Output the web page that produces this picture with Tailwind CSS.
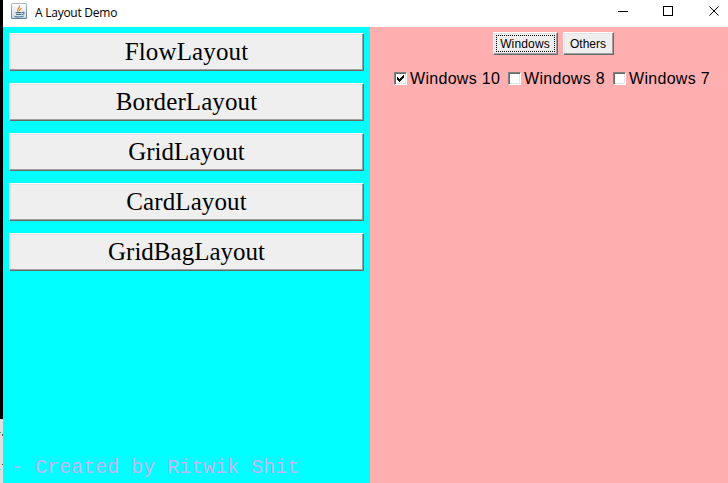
<!DOCTYPE html>
<html lang="en">
<head>
<meta charset="utf-8">
<title>A Layout Demo</title>
<script src="https://cdn.jsdelivr.net/npm/@tailwindcss/browser@4"></script>
</head>
<body class="flex h-[483px] w-[728px] overflow-hidden bg-white text-black">
<!-- Desktop edge behind the window -->
<div class="flex w-[3px] shrink-0 flex-col bg-[#dedede]">
  <div class="h-[419px] bg-black"></div>
  <div class="mt-[13px] h-px w-px bg-[#239ca6]"></div>
  <div class="mt-px ml-[2px] h-[2px] bg-[#5c5a20]"></div>
  <div class="mt-[28px] ml-[2px] h-px bg-[#5c5a20]"></div>
  <div class="mt-[4px] h-px w-px bg-[#6cd0dc]"></div>
</div>
<div class="flex min-w-0 flex-1 flex-col">
  <header class="flex h-[27px] shrink-0 items-start bg-white">
    <svg class="mt-[3px] ml-[8px] shrink-0" width="16" height="16" viewBox="0 0 16 16">
      <defs><linearGradient id="tile" x2="0" y2="1"><stop stop-color="#a9bccb"/><stop offset="1" stop-color="#577b98"/></linearGradient>
      <linearGradient id="face" x2="0" y2="1"><stop stop-color="#fdfdfd"/><stop offset="1" stop-color="#cfdde6"/></linearGradient></defs>
      <rect width="16" height="16" rx="1.5" fill="url(#tile)"/>
      <rect x="1" y="1" width="14" height="14" rx=".5" fill="url(#face)"/>
      <path d="M7.4 8.6C4.6 6.4 9.6 5.3 8.4 2.5M8.5 8.4c-1-1.5 1.2-2 2-3" fill="none" stroke="#ef8c2e" stroke-width="1.3"/>
      <path d="M4.5 9.5h6M5 11.4h5.5M3.5 13.2c2 .8 6.5.8 9 0M11 9.4c2.8-.9 2.8 1.5.2 2.2" fill="none" stroke="#50718e" stroke-width="1.1"/>
    </svg>
    <h1 class="mt-[4px] ml-[8px] w-[90px] whitespace-nowrap font-['Open_Sans',sans-serif] text-[12px] leading-[17px] tracking-[-0.25px]">A Layout Demo</h1>
    <svg class="mt-[6px] mr-[9px] ml-auto" width="101" height="10" viewBox="0 0 101 10" fill="none" stroke="#000">
      <path d="M0 5.5h10"/><rect x="45.5" y=".5" width="9" height="9"/><path d="m91.5.5 9 9m0-9-9 9"/>
    </svg>
  </header>
  <div class="flex min-h-0 flex-1">
    <aside class="flex w-[367px] shrink-0 flex-col bg-[#00ffff] pt-[6px]">
      <div class="flex flex-col gap-[12px] px-[6px] font-['Liberation_Serif',serif] text-[25px]">
        <button class="h-[38px] border border-t-white border-r-[#696969] border-b-[#696969] border-l-white bg-[#efefef] leading-[36px] tracking-[0.15px] shadow-[inset_-1px_-1px_#a0a0a0,inset_1px_1px_#e3e3e3]">FlowLayout</button>
        <button class="h-[38px] border border-t-white border-r-[#696969] border-b-[#696969] border-l-white bg-[#efefef] leading-[36px] tracking-[0.1px] shadow-[inset_-1px_-1px_#a0a0a0,inset_1px_1px_#e3e3e3]">BorderLayout</button>
        <button class="h-[38px] border border-t-white border-r-[#696969] border-b-[#696969] border-l-white bg-[#efefef] leading-[36px] shadow-[inset_-1px_-1px_#a0a0a0,inset_1px_1px_#e3e3e3]">GridLayout</button>
        <button class="h-[38px] border border-t-white border-r-[#696969] border-b-[#696969] border-l-white bg-[#efefef] leading-[36px] tracking-[0.1px] shadow-[inset_-1px_-1px_#a0a0a0,inset_1px_1px_#e3e3e3]">CardLayout</button>
        <button class="h-[38px] border border-t-white border-r-[#696969] border-b-[#696969] border-l-white bg-[#efefef] leading-[36px] shadow-[inset_-1px_-1px_#a0a0a0,inset_1px_1px_#e3e3e3]">GridBagLayout</button>
      </div>
      <p class="mt-auto mb-[4px] whitespace-pre pl-[8px] font-['Liberation_Mono',monospace] text-[20px] leading-[23px] text-[#c4b4f4]">- Created by Ritwik Shit</p>
    </aside>
    <main class="flex flex-1 flex-col bg-[#ffafaf] pt-[5px] font-['Liberation_Sans',sans-serif]">
      <div class="flex gap-[5px] pl-[123px] text-[12px]">
        <button class="flex h-[23px] w-[65px] border border-t-white border-r-[#696969] border-b-[#696969] border-l-white bg-[#efefef] p-[2px] leading-[17px] shadow-[inset_-1px_-1px_#a0a0a0,inset_1px_1px_#e3e3e3]"><span class="h-[17px] w-[59px] border border-dotted border-black pr-px leading-[16px] tracking-[0.15px]">Windows</span></button>
        <button class="h-[23px] w-[51px] border border-t-white border-r-[#696969] border-b-[#696969] border-l-white bg-[#efefef] pt-[2px] pr-px leading-[19px] shadow-[inset_-1px_-1px_#a0a0a0,inset_1px_1px_#e3e3e3]">Others</button>
      </div>
      <div class="mt-[15px] flex whitespace-nowrap pl-[24px] text-[16px] leading-[18px] tracking-[0.3px]">
        <label class="flex w-[114px] gap-[3px]"><span class="mt-[2px] size-[13px] shrink-0 border border-t-[#808080] border-r-white border-b-white border-l-[#808080] bg-white shadow-[inset_1px_1px_#696969,inset_-1px_-1px_#e3e3e3]"><svg width="11" height="11" viewBox="0 0 11 11"><path d="M2 4h1v1h1v1h1V5h1V4h1V3h1V2h1v3H8v1H7v1H6v1H5v1H4V8H3V7H2z"/></svg></span>Windows 10</label>
        <label class="flex w-[105px] gap-[3px]"><span class="mt-[2px] size-[13px] shrink-0 border border-t-[#808080] border-r-white border-b-white border-l-[#808080] bg-white shadow-[inset_1px_1px_#696969,inset_-1px_-1px_#e3e3e3]"></span>Windows 8</label>
        <label class="flex gap-[3px]"><span class="mt-[2px] size-[13px] shrink-0 border border-t-[#808080] border-r-white border-b-white border-l-[#808080] bg-white shadow-[inset_1px_1px_#696969,inset_-1px_-1px_#e3e3e3]"></span>Windows 7</label>
      </div>
    </main>
  </div>
</div>
</body>
</html>
